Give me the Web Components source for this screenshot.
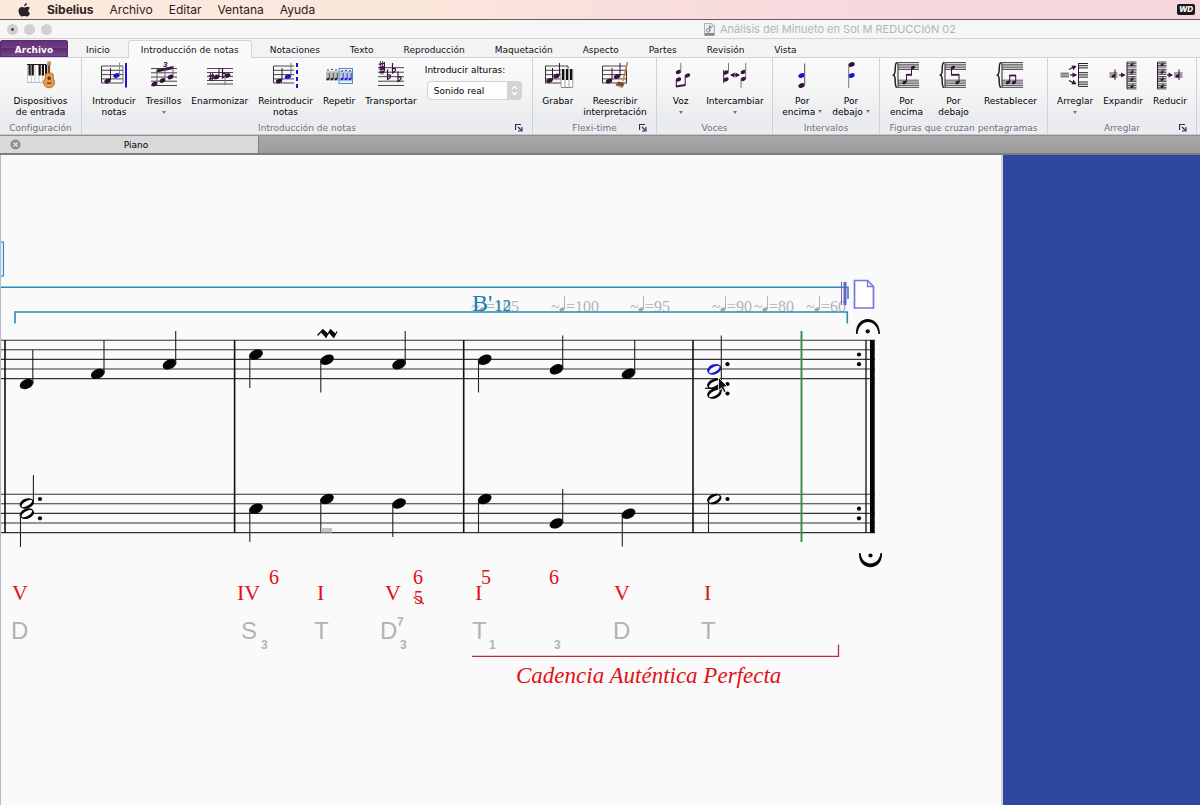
<!DOCTYPE html>
<html lang="es">
<head>
<meta charset="utf-8">
<title>Sibelius</title>
<style>
html, body { margin: 0; height: 100%; }
body { font-family: "DejaVu Sans", "Noto Sans", sans-serif; font-size: 9px; color: #000; overflow: hidden; background: #fafafa; }
</style>
</head>
<body>
<sib-app></sib-app>
<script>
const define = (name, html, setup) => {
  const tpl = document.createElement('template');
  tpl.innerHTML = html;
  customElements.define(name, class extends HTMLElement {
    constructor() {
      super();
      this.attachShadow({ mode: 'open' }).append(tpl.content.cloneNode(true));
    }
    connectedCallback() { if (setup) setup(this, this.shadowRoot); }
  });
};

/* ---------- small drawing helpers ---------- */
const INK = '#3a1040', BLUE = '#1c14d0', LINE = '#333';
const ln = (x1, y1, x2, y2, c = LINE, w = 1) => `<path d="M${x1} ${y1}L${x2} ${y2}" stroke="${c}" stroke-width="${w}" fill="none"/>`;
const staff = (x1, x2, ys, c = LINE, w = 0.9) => ys.map(y => ln(x1, y, x2, y, c, w)).join('');
const head = (x, y, c = INK, rx = 3.3, ry = 2.3) => `<ellipse cx="${x}" cy="${y}" rx="${rx}" ry="${ry}" transform="rotate(-24 ${x} ${y})" fill="${c}"/>`;
const box = (x, y, w, h, c) => `<rect x="${x}" y="${y}" width="${w}" height="${h}" fill="${c}"/>`;
const sharp = (x, y, s = 1) => ln(x - s, y - 4 * s, x - s, y + 4 * s, INK, .9) + ln(x + s, y - 4 * s, x + s, y + 4 * s, INK, .9) + ln(x - 2.5 * s, y - 1 * s, x + 2.5 * s, y - 2 * s, INK, 1.3) + ln(x - 2.5 * s, y + 2 * s, x + 2.5 * s, y + 1 * s, INK, 1.3);
const flat = (x, y) => `<path d="M${x} ${y - 7}V${y + 3}C${x + 5} ${y} ${x + 3} ${y - 3} ${x} ${y - 1}" stroke="${INK}" stroke-width="1.2" fill="none"/>`;
const arrow = (x1, y1, x2, y2) => {
  const a = Math.atan2(y2 - y1, x2 - x1) * 180 / Math.PI;
  return ln(x1, y1, x2 - Math.sign(x2 - x1), y2, INK, 1.2) + `<path d="M0 0L-4.5 -2.6V2.6Z" fill="${INK}" transform="translate(${x2} ${y2}) rotate(${a})"/>`;
};
const G5 = [5, 9.3, 13.6, 17.9, 22];
const bracePair = (notes) => `<path d="M11 1.5C7.500 2.500 11 12 7.500 14C11 16 7.500 25.500 11 26.500" stroke="#222" stroke-width="1.500" fill="none"/>` +
  ln(12, 1, 12, 27, '#222', 1) + staff(12, 33, [1.5, 3.3, 5, 6.8, 8.5], '#444', .9) + staff(12, 33, [19.2, 21, 22.8, 24.6, 26.4], '#444', .9) + notes;
const miniGroup = (x1, x2, y) => staff(x1, x2, [y, y + 1.7, y + 3.4, y + 5], '#333', .9) + head((x1 + x2) / 2, y + 3, INK, 1.6, 1.2) + ln((x1 + x2) / 2 + 1, y, (x1 + x2) / 2 + 1, y + 3, INK, 1);

const ICONS = {
  devices: box(6, 3.5, 19.5, 18, '#fff') + ln(6, 3.5, 25, 3.5, '#222') + ln(6, 21.5, 25, 21.5, '#bbb') + [6.5, 10.3, 14.1, 17.9, 21.7, 25].map(x => ln(x, 4, x, 21, '#aaa', .7)).join('') +
    [7.5, 10.6, 17.6, 20.8, 24].map(x => box(x, 3.5, 2.2, 11, '#151515')).join('') +
    ln(28, 2, 28, 15, '#7a4b24', 2.2) + box(26.3, .5, 3.6, 4, '#b98a5c') +
    `<path d="M24.500 13C26 11.500 30.500 11.500 32 13C33 14.500 31.500 16.500 32.500 18C34.500 20.500 34 26.500 28.200 26.800C22 26.500 21.500 20.500 23.800 18C25 16.500 23.500 14.500 24.500 13Z" fill="#e8994c" stroke="#a55f22" stroke-width=".8"/><circle cx="28.200" cy="17.300" r="1.700" fill="#5a2c10"/>` + box(26, 21.5, 4.500, 1.200, '#6a3512'),
  input: staff(7.5, 29, G5) + ln(7.5, 5, 7.5, 22) + ln(29, 5, 29, 22, '#777') + ln(32, 2, 32, 26.500, BLUE, 2) + head(13.500, 20) + ln(16.500, 7, 16.500, 19, INK, 1) + head(22.500, 14.5, BLUE) + ln(25.500, 1.500, 25.500, 14, '#888', 1),
  triplet: staff(7, 33, [7.5, 11.8, 16, 20.2, 24.500]) + `<path d="M12.500 8.500L29.500 5V8L12.500 11.500Z" fill="${INK}"/>` + ln(13, 9, 13, 22, '#666') + ln(21, 8, 21, 18, '#666') + ln(29, 6, 29, 15, '#666') + head(10.5, 23, INK, 3, 2.200) + head(18.500, 19.500, INK, 3, 2.200) + head(26.500, 16, INK, 3, 2.200) + `<text x="19" y="6" font-family="Liberation Sans, sans-serif" font-size="8" font-weight="bold" font-style="italic" fill="${INK}">3</text>`,
  enharm: staff(7, 33, [7.500, 11.500, 15.500, 19.500, 23]) + sharp(11.500, 16) + head(16.500, 16, INK, 3, 2.300) + ln(19, 7, 19, 16, INK) + flat(22.500, 14) + head(27.500, 14.500, INK, 3, 2.300) + ln(25, 15, 25, 24, '#777'),
  reinput: staff(7.5, 28, G5) + ln(7.5, 5, 7.5, 22) + `<path d="M31 2V27" stroke="${BLUE}" stroke-width="2" stroke-dasharray="4 3"/>` + head(13, 20) + ln(16, 7, 16, 19, INK, 1) + head(22, 15.500, BLUE) + ln(25, 2, 25, 15, '#777', 1),
  repeat: box(7, 11, 12.5, 8, '#d8d8d8') + staff(7, 19.5, [11, 13, 15, 17, 19], '#888', .7) + [9, 13, 17].map(x => head(x, 18, INK, 1.6, 1.200) + ln(x + 1.3, 12, x + 1.3, 18, '#333', .8)).join('') + box(20, 7.5, 13.500, 15, '#dff0ff') + staff(20, 33.5, [11, 13, 15, 17, 19], '#779', .7) + [23, 27, 31].map(x => head(x, 18, BLUE, 1.6, 1.200) + ln(x + 1.2, 12, x + 1.2, 18, BLUE, .8)).join('') + `<rect x="20" y="7.500" width="13.500" height="15" fill="none" stroke="#4a8fc8"/><path d="M8 9h2M12 8.500h2M16 9h2M22 10h2M26 9.500h2M30 10h2" stroke="#444"/>`,
  transpose: staff(7, 33, [6.700, 11.200, 15.700, 20.200, 24.500]) + sharp(10.500, 4.500, 1.100) + sharp(11, 9.500, 1) + ln(13.500, 1, 13.500, 10, INK) + flat(16.500, 15.500) + flat(21.500, 9) + flat(27, 17.500),
  record: staff(7, 30, G5) + ln(7.500, 5, 7.500, 22) + ln(30, 5, 30, 9) + head(11.500, 19.500) + ln(14.500, 7, 14.500, 19, INK) + head(18.500, 15) + ln(21.500, 2, 21.500, 14, INK) + box(23, 7.500, 12, 19, '#fff') + [24, 28, 32].map(x => box(x, 8, 2.300, 11, '#111')).join('') + [23, 27, 31, 34.800].map(x => ln(x, 8, x, 26, '#888', .8)).join('') + ln(23, 26.500, 35, 26.500, '#888'),
  rewrite: staff(7.5, 32, G5) + ln(7.500, 5, 7.500, 22) + ln(31.500, 5, 31.500, 22) + head(14, 20) + ln(17, 7, 17, 19, INK) + head(22, 15.500) + ln(25, 2, 25, 15, INK) + ln(32.500, 1, 28, 20, '#c48a50', 1.700) + `<path d="M23 20.500L29.500 22L27.500 27L20.500 24.500Z" fill="#7a4a2a"/><path d="M22 24.500L28 26.500" stroke="#d8b48a"/>`,
  voice: head(17.500, 11, INK, 2.800, 2) + ln(19.800, 2, 19.800, 11, '#777') + head(17.500, 18.500, INK, 2.800, 2) + ln(15.300, 19, 15.300, 26, INK) + `<path d="M15 24.500L24.500 23V25L15 26.500Z" fill="${INK}"/>` + head(26.500, 14.500, INK, 2.800, 2) + ln(24.200, 15, 24.200, 24, INK),
  swap: head(11, 11.500, INK, 2.800, 2) + ln(13.500, 2, 13.500, 11, '#777') + head(11, 18.500, INK, 2.800, 2) + ln(8.700, 9, 8.700, 22, INK) + arrow(20, 14, 25, 14) + arrow(20, 14, 15, 14) + head(28.300, 11, INK, 2.800, 2) + ln(30.700, 2, 30.700, 17, '#777') + head(28.300, 18, INK, 2.800, 2) + ln(26, 18, 26, 27, '#777'),
  above: head(19.500, 14.500, BLUE) + head(19.500, 24.500) + ln(22.700, 2.500, 22.700, 24, '#555'),
  below: head(20.500, 3.500) + head(20.500, 14.500, BLUE) + ln(17.700, 4, 17.700, 27, '#777'),
  crossUp: bracePair(head(27, 6.500, INK, 2.200, 1.600) + ln(25.500, 7, 25.500, 14, INK) + ln(20.500, 13.800, 26, 13.800, INK, 1.800) + ln(20.500, 13, 20.500, 21, INK) + head(18.500, 21.500, INK, 2.200, 1.600)),
  crossDown: bracePair(head(20, 6.500, INK, 2.200, 1.600) + ln(18.500, 7, 18.500, 14, INK) + ln(18, 13.800, 26, 13.800, INK, 1.800) + ln(26, 13, 26, 21, INK) + head(24.500, 21.500, INK, 2.200, 1.600)),
  crossReset: bracePair(head(18, 21.500, INK, 2.200, 1.600) + ln(19.700, 14, 19.700, 21, INK) + ln(19.500, 14.500, 26, 14.500, INK, 1.800) + ln(25.700, 14, 25.700, 21, INK) + head(24, 21.500, INK, 2.200, 1.600)),
  arrange: staff(5.500, 14, [12.200, 14, 15.800], '#333', .9) + arrow(14, 8.500, 21.500, 5) + arrow(15, 14, 22, 14) + arrow(14, 19.500, 21.500, 23) + ln(23.500, 2, 23.500, 25, '#222') + [2.500, 11.700, 21].map(y => staff(23.500, 33, [y, y + 2.200, y + 4.400], '#222', 1)).join(''),
  expand: staff(6.500, 14.500, [12, 14, 16], '#333', .9) + head(10.500, 15, INK, 2, 1.500) + ln(12, 8.500, 12, 19, INK) + arrow(16, 14, 22.500, 14) + ln(24, 1, 24, 28, '#222') + [1, 8.300, 15.600, 22.900].map(y => miniGroup(24, 33.500, y)).join(''),
  reduce: ln(7.500, 1, 7.500, 28, '#222') + [1, 8.300, 15.600, 22.900].map(y => miniGroup(7.500, 16.500, y)).join('') + arrow(17, 14, 23, 14) + staff(24, 32.500, [12, 14, 16], '#333', .9) + head(27.500, 15, INK, 2, 1.500) + ln(29, 8.500, 29, 19, INK),
};

/* ---------- menu bar ---------- */
define('sib-menubar', `
<style>
:host { display: block; height: 19px; border-bottom: 1px solid #6b5560; background: linear-gradient(90deg, #fce9dd 0%, #fbe6db 35%, #f7dadd 65%, #f5d6dc 100%); font: 12px/19px Inter, Roboto, sans-serif; color: #2a2224; }
nav { display: flex; align-items: center; gap: 16px; padding: 0 5px 0 18px; height: 19px; }
a { color: inherit; text-decoration: none; }
.app { font-weight: 700; }
svg { display: block; }
.wd { margin-left: auto; width: 18px; height: 11px; border-radius: 2px; background: #1d1418; color: #fff; font: italic 800 8px/11px Inter, sans-serif; text-align: center; }
</style>
<nav>
<svg width="13" height="14" viewBox="0 0 13 14" aria-hidden="true"><path d="M9 0C9 1.800 7.600 3.300 6.200 3.200C6.100 1.600 7.500.2 9 0ZM12 10.200C11.400 11.900 10.300 13.500 9 13.500C8 13.500 7.700 12.900 6.500 12.900C5.300 12.900 4.900 13.500 4 13.500C2.300 13.500.5 10.500.5 7.800C.5 5.300 2.100 3.900 3.800 3.900C4.900 3.900 5.700 4.600 6.500 4.600C7.200 4.600 8.100 3.800 9.400 3.800C10.200 3.800 11.300 4.200 11.900 5.100C9.800 6.400 10 9.300 12 10.200Z" fill="#2a2224"/></svg>
<a class="app" href="#">Sibelius</a><a href="#">Archivo</a><a href="#">Editar</a><a href="#">Ventana</a><a href="#">Ayuda</a>
<span class="wd">WD</span>
</nav>`);

/* ---------- window title ---------- */
define('sib-titlebar', `
<style>
:host { display: flex; align-items: center; height: 18px; background: #f6f6f6; border-bottom: 1px solid #d0d4da; font: 11px/18px Inter, Roboto, sans-serif; color: #b4b4b6; }
.lights { display: flex; gap: 6px; padding-left: 7px; width: 453px; }
button { width: 11px; height: 11px; border: 0; border-radius: 50%; padding: 0; background: #d0d0d0; }
button:first-child { background: radial-gradient(circle, #555 0 1px, #d0d0d0 2px); }
.title { flex: 1; display: flex; justify-content: center; align-items: center; gap: 5px; white-space: nowrap; }
svg { display: block; }
</style>
<div class="lights"><button aria-label="Cerrar"></button><button aria-label="Minimizar"></button><button aria-label="Ampliar"></button></div>
<div class="title"><svg width="11" height="13" viewBox="0 0 11 13" aria-hidden="true"><path d="M.5.5H8L10.500 3V12.500H.5Z" fill="#ececf0" stroke="#b0b0b8"/><path d="M8 .5V3H10.500" stroke="#b0b0b8" fill="none"/><path d="M5.500 2.500V8M5.500 3L7.500 5" stroke="#8e86a0" stroke-width="1.200"/><circle cx="4.300" cy="7.300" r="1.800" fill="none" stroke="#8e86a0"/><path d="M1 10H10V12.500H1Z" fill="#8d8492"/></svg><slot></slot></div>`);

/* ---------- ribbon tabs ---------- */
define('sib-tab', `
<style>
:host { display: block; }
button { box-sizing: border-box; display: block; height: 17px; padding: 2px 12px 0; border: 0; background: none; font: inherit; color: #111; white-space: nowrap; }
:host([active]) { margin-bottom: -1px; }
:host([active]) button { height: 18px; background: #fafafa; border: 1px solid #cbd6e2; border-bottom: 0; border-radius: 3px 3px 0 0; padding: 0 12px; }
:host([file]) button { width: 68px; background: linear-gradient(#5f2f74, #6f3a84 45%, #592a6e 50%, #7d4a92); color: #fff; font-weight: 700; border-radius: 3px 3px 0 0; box-shadow: inset 0 0 0 1px #5c2b70; }
</style><button role="tab"><slot></slot></button>`);
define('sib-tabs', `
<style>
:host { display: flex; align-items: flex-end; gap: 6px; height: 18px; background: #f3f3f3; border-bottom: 1px solid #cbd6e2; }
</style><slot></slot>`);

/* ---------- ribbon pieces ---------- */
define('sib-tool', `
<style>
:host { display: block; }
button { display: flex; flex-direction: column; align-items: center; min-width: 31px; padding: 0; border: 0; background: none; font: inherit; color: #000; line-height: 11px; text-align: center; white-space: nowrap; }
svg { display: block; width: 40px; height: 28px; margin: 0 -12px 7px; overflow: visible; }
i { display: inline-block; border: 2px solid transparent; border-top: 3px solid #777; border-bottom: 0; vertical-align: 2px; margin-left: 3px; }
i.under { display: block; margin: 4px 0 0; }
</style><button><svg viewBox="0 0 40 28" aria-hidden="true"></svg><span><slot></slot></span></button>`,
(el, root) => {
  root.querySelector('svg').innerHTML = ICONS[el.getAttribute('icon')];
  const menu = el.getAttribute('menu');
  if (menu) {
    const i = document.createElement('i');
    if (menu === 'under') { i.className = 'under'; root.querySelector('button').append(i); }
    else root.querySelector('span').append(i);
  }
});
define('sib-group', `
<style>
:host { display: flex; flex-direction: column; justify-content: space-between; box-sizing: border-box; height: 76px; border-right: 1px solid #ccd3dc; padding: 3px 0 0; }
.tools { display: flex; align-items: flex-start; justify-content: center; gap: 10px; }
:host([wide]) .tools { gap: 15px; }
footer { display: grid; grid-template-columns: 1fr auto 1fr; align-items: center; line-height: 12px; color: #6f727b; padding: 0 5px; white-space: nowrap; }
button { display: none; justify-self: end; width: 9px; height: 9px; padding: 0; margin-right: 3px; border: 0; background: none; }
:host([launcher]) button { display: block; }
svg { display: block; }
span { grid-column: 2; }
</style>
<div class="tools"><slot></slot></div>
<footer><span></span><button aria-label="Más opciones"><svg width="8" height="8" viewBox="0 0 8 8"><path d="M.5 6V.5H6M3 3L6 6M7 3V7H3" fill="none" stroke="#4a1c5a" stroke-width="1.200"/></svg></button></footer>`,
(el, root) => { root.querySelector('footer span').textContent = el.getAttribute('label'); });
define('sib-pitch-select', `
<style>
:host { display: block; padding: 2px 0 0 0; width: 95px; }
label { display: block; line-height: 14px; white-space: nowrap; margin-left: -2px; }
.wrap { position: relative; width: 95px; margin-top: 4px; }
select { appearance: none; box-sizing: border-box; width: 95px; height: 19px; border: 1px solid #d2d2d4; border-radius: 4px; background: linear-gradient(90deg, #fdfdfd 79px, #d3d3d3 79px); font: inherit; line-height: 16px; padding: 0 16px 0 6px; color: #000; }
svg { position: absolute; right: 4px; top: 4px; pointer-events: none; }
</style>
<label for="p">Introducir alturas:</label>
<div class="wrap"><select id="p"><option>Sonido real</option><option>Sonido escrito</option></select><svg width="7" height="11" viewBox="0 0 7 11"><path d="M1 4L3.500 1.500L6 4M1 7L3.500 9.500L6 7" fill="none" stroke="#fff" stroke-width="1.300"/></svg></div>`);
define('sib-ribbon', `
<style>
:host { display: grid; grid-template-columns: 82px 451px 124px 116px 107px 168px 149px; height: 76px; background: linear-gradient(#fafafa, #f5f5f6 45%, #eaebee 80%, #ecedf0); border-bottom: 1px solid #c4c8ce; overflow: hidden; }
</style><slot></slot>`);

/* ---------- document tabs ---------- */
define('sib-doctabs', `
<style>
:host { display: flex; height: 17px; border-top: 1px solid #8f8f8f; border-bottom: 2px solid #7d7d7d; background: linear-gradient(#a9a9a9, #9c9c9c); }
button { box-sizing: border-box; width: 259px; display: grid; grid-template-columns: 28px 1fr 14px; align-items: center; padding: 0; border: 0; border-right: 1px solid #7d7d7d; background: #d9d9d9; font: inherit; color: #000; }
svg { display: block; margin-left: 10px; }
</style>
<button><svg width="11" height="11" viewBox="0 0 11 11"><circle cx="5.500" cy="5.500" r="5" fill="#8c8c8c"/><path d="M3.500 3.500L7.500 7.500M7.500 3.500L3.500 7.500" stroke="#e8e8e8" stroke-width="1.300"/></svg><span><slot></slot></span></button>`);

/* ---------- score ---------- */
define('sib-score', `
<style>
:host { display: flex; flex: 1; min-height: 0; background: #2f479f; }
.page { flex: 1; min-width: 0; overflow: hidden; box-sizing: border-box; background: #fafafa; border-left: 1px solid #b8b6cc; border-right: 2px solid #d4d4d8; }
.desk { width: 197px; }
svg { display: block; margin-left: -1px; }
.serif { font-family: "Liberation Serif", serif; }
.sans { font-family: "Liberation Sans", sans-serif; fill: #b2b2b6; }
.deg { font-size: 22px; fill: #e01018; }
.fig { font-size: 20px; fill: #e01018; }
.fn { font-size: 24px; }
.sub { font-size: 12px; font-weight: 700; }
.tempo { font-size: 16px; fill: #b4b4b4; }
</style>
<div class="page"><svg width="1001" height="650" viewBox="0 155 1001 650" role="img" aria-label="Partitura de piano"></svg></div><div class="desk"></div>`,
(el, root) => {
  const K = '#050508', T = '#2b8ab8';
  const lines = [0, 9.6, 19.2, 28.8, 38.4];
  let s = '';
  /* staves and bar lines */
  for (const top of [340.2, 494.2]) s += lines.map(d => ln(0, top + d, 875, top + d, '#333', 1.100)).join('');
  s += [5, 234.600, 463.700, 693].map(x => ln(x, 340, x, 533, '#111', 1.600)).join('');
  s += ln(866, 340, 866, 533, '#111', 1.300) + box(870, 340, 4.700, 193, K);
  for (const y of [354.500, 364.200, 508.700, 518.300]) s += `<circle cx="859" cy="${y}" r="2.100" fill="${K}"/>`;
  /* quarter notes: x, y, stem direction, stem end */
  const quarters = [[26.600, 384, 1, 350], [97.800, 373.800, 1, 340], [169.500, 364.300, 1, 331], [256, 354.500, -1, 388], [327, 359.700, -1, 392.500], [399, 364.200, 1, 331], [484.700, 359.700, -1, 392.500], [556.500, 369.300, 1, 335.500], [628.500, 373.700, 1, 340],
    [256, 508.600, -1, 542], [327, 499, -1, 532], [399, 503.500, -1, 537], [484.700, 499, -1, 532], [556.500, 523.400, 1, 489], [628.500, 513.700, -1, 546.500]];
  for (const [x, y, dir, end] of quarters) s += `<ellipse cx="${x}" cy="${y}" rx="7.200" ry="4.700" transform="rotate(-24 ${x} ${y})" fill="${K}"/>` + ln(x + 6.200 * dir, y, x + 6.200 * dir, end, '#222', 1.100);
  /* half notes */
  const half = (x, y, c) => `<g transform="translate(${x} ${y})"><ellipse rx="7.400" ry="5" transform="rotate(-20)" fill="${c}"/><ellipse rx="6" ry="2.400" transform="rotate(-30)" fill="#fafafa"/></g>`;
  const dot = (x, y) => `<circle cx="${x}" cy="${y}" r="2.100" fill="${K}"/>`;
  s += half(26.800, 503.500, K) + half(26.800, 513.700, K) + ln(33.400, 475, 33.400, 503, '#222', 1.100) + ln(20.500, 514, 20.500, 547, '#222', 1.100) + dot(40, 499) + dot(40, 518.300);
  s += half(714.300, 369.300, BLUE) + half(714.300, 384, K) + half(714.300, 393.500, K) + ln(705, 388.300, 725, 388.300, K, 1.200) + ln(721.300, 335.500, 721.300, 392, '#222', 1.100) + dot(727.500, 364.200) + dot(727.500, 384) + dot(727.500, 393.500);
  s += half(714.300, 499, K) + ln(708.500, 499, 708.500, 532, '#222', 1.100) + dot(727.500, 499);
  /* ornaments */
  s += `<path d="M317.500 335.500L322.500 330L326 337L330.500 330L334 337L337 331.500" fill="none" stroke="${K}" stroke-width="1.200"/><path d="M321 332.500L323 329L328 333.500L326 338ZM328.500 332.500L330.500 329L335.500 333.500L333.500 338Z" fill="${K}"/>`;
  s += `<path d="M856 334C855 314 880 314 880 334H878.500C877 318 859 318 857.500 334Z" fill="${K}"/>` + dot(867.700, 331.300);
  s += `<path d="M859 553C858 572 883 572 882 553H880.500C879 567 862 567 860.500 553Z" fill="${K}"/>` + dot(870.500, 555.500);
  s += box(321, 528, 11, 4.500, '#c2c2c2') + ln(801.500, 331, 801.500, 542, '#3f9050', 2);
  /* tempo marks */
  for (const [x, t] of [[486, '105'], [566, '100'], [645, '95'], [727, '90'], [769, '80'], [821, '60']])
    s += `<text class="serif tempo" x="${x}" y="312">=${t}</text><text class="serif tempo" x="${x - 15}" y="312">~</text>` + head(x - 4, 309.500, '#a8a8a8', 2.700, 1.900) + ln(x - 1.500, 296, x - 1.500, 309, '#b4b4b4', 1);
  /* analysis brackets */
  s += `<rect x="-3" y="242" width="6.500" height="34" fill="#e0eff4" stroke="${T}" stroke-width="1.100"/>`;
  s += `<path d="M0 287.200H848V299" fill="none" stroke="${T}" stroke-width="1.600"/><path d="M15 323.500V312H847.300V323.500" fill="none" stroke="${T}" stroke-width="1.600"/>`;
  s += ln(841.500, 282, 841.500, 305, '#7068c8', 1) + ln(845, 282, 845, 305, '#6a60cc', 3) + `<path d="M854.500 280.500H867.500L873.500 286.500V308H854.500Z" fill="#fff" stroke="#7478d8" stroke-width="1.700"/><path d="M867.500 280.500V286.500H873.500" fill="none" stroke="#7478d8" stroke-width="1.300"/>`;
  s += `<text class="serif" x="472" y="311" font-size="24" fill="#1580b8">B'</text><text class="serif" x="494" y="311" font-size="17" fill="#1580b8">12</text>`;
  /* degrees, figures, functions */
  const put = (cls, y, list) => { for (const [x, t] of list) s += `<text class="${cls}" x="${x}" y="${y}">${t}</text>`; };
  put('serif deg', 600, [[12, 'V'], [237, 'IV'], [317, 'I'], [385, 'V'], [475, 'I'], [614, 'V'], [704, 'I']]);
  put('serif fig', 584, [[269, '6'], [413, '6'], [481, '5'], [549, '6']]);
  s += `<text class="serif" x="414" y="604" font-size="18" fill="#e01018">5</text>` + ln(413.500, 597, 424, 604, '#e01018', 1.300);
  put('sans fn', 639, [[11, 'D'], [241, 'S'], [314, 'T'], [380, 'D'], [472, 'T'], [613, 'D'], [701, 'T']]);
  put('sans sub', 649, [[261, '3'], [400, '3'], [489, '1'], [554, '3']]);
  put('sans sub', 626, [[397, '7']]);
  s += `<path d="M472 656.300H838.500V644.500" fill="none" stroke="#b8303a" stroke-width="1.300"/><text class="serif" x="516" y="683" font-size="23" font-style="italic" fill="#e01018">Cadencia Auténtica Perfecta</text>`;
  /* pointer */
  s += `<path d="M718.500 377.500V390.500L721.500 387.800L724 392.500L726 391.500L723.800 387L727.500 386.500Z" fill="#111" stroke="#fff" stroke-width=".8"/>`;
  root.querySelector('svg').innerHTML = s;
});

/* ---------- whole window ---------- */
define('sib-app', `
<style>:host { display: flex; flex-direction: column; height: 100vh; }</style>
<sib-menubar></sib-menubar>
<sib-titlebar>Análisis del Minueto en Sol M REDUCCIóN 02</sib-titlebar>
<sib-tabs><sib-tab file>Archivo</sib-tab><sib-tab>Inicio</sib-tab><sib-tab active>Introducción de notas</sib-tab><sib-tab>Notaciones</sib-tab><sib-tab>Texto</sib-tab><sib-tab>Reproducción</sib-tab><sib-tab>Maquetación</sib-tab><sib-tab>Aspecto</sib-tab><sib-tab>Partes</sib-tab><sib-tab>Revisión</sib-tab><sib-tab>Vista</sib-tab></sib-tabs>
<sib-ribbon>
<sib-group label="Configuración"><sib-tool icon="devices">Dispositivos<br>de entrada</sib-tool></sib-group>
<sib-group label="Introducción de notas" launcher><sib-tool icon="input">Introducir<br>notas</sib-tool><sib-tool icon="triplet" menu="under">Tresillos</sib-tool><sib-tool icon="enharm">Enarmonizar</sib-tool><sib-tool icon="reinput">Reintroducir<br>notas</sib-tool><sib-tool icon="repeat">Repetir</sib-tool><sib-tool icon="transpose">Transportar</sib-tool><sib-pitch-select></sib-pitch-select></sib-group>
<sib-group label="Flexi-time" launcher><sib-tool icon="record">Grabar</sib-tool><sib-tool icon="rewrite">Reescribir<br>interpretación</sib-tool></sib-group>
<sib-group label="Voces"><sib-tool icon="voice" menu="under">Voz</sib-tool><sib-tool icon="swap" menu="under">Intercambiar</sib-tool></sib-group>
<sib-group label="Intervalos"><sib-tool icon="above" menu="inline">Por<br>encima</sib-tool><sib-tool icon="below" menu="inline">Por<br>debajo</sib-tool></sib-group>
<sib-group label="Figuras que cruzan pentagramas" wide><sib-tool icon="crossUp">Por<br>encima</sib-tool><sib-tool icon="crossDown">Por<br>debajo</sib-tool><sib-tool icon="crossReset">Restablecer</sib-tool></sib-group>
<sib-group label="Arreglar" launcher><sib-tool icon="arrange" menu="under">Arreglar</sib-tool><sib-tool icon="expand">Expandir</sib-tool><sib-tool icon="reduce">Reducir</sib-tool></sib-group>
</sib-ribbon>
<sib-doctabs>Piano</sib-doctabs>
<sib-score></sib-score>`);
</script>
</body>
</html>
